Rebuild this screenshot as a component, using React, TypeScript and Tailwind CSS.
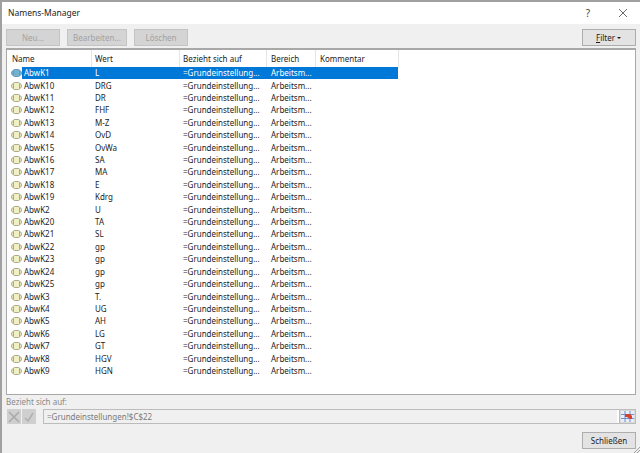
const rows: [string, string][] = [
  ['AbwK1', 'L'],
  ['AbwK10', 'DRG'],
  ['AbwK11', 'DR'],
  ['AbwK12', 'FHF'],
  ['AbwK13', 'M-Z'],
  ['AbwK14', 'OvD'],
  ['AbwK15', 'OvWa'],
  ['AbwK16', 'SA'],
  ['AbwK17', 'MA'],
  ['AbwK18', 'E'],
  ['AbwK19', 'Kdrg'],
  ['AbwK2', 'U'],
  ['AbwK20', 'TA'],
  ['AbwK21', 'SL'],
  ['AbwK22', 'gp'],
  ['AbwK23', 'gp'],
  ['AbwK24', 'gp'],
  ['AbwK25', 'gp'],
  ['AbwK3', 'T.'],
  ['AbwK4', 'UG'],
  ['AbwK5', 'AH'],
  ['AbwK6', 'LG'],
  ['AbwK7', 'GT'],
  ['AbwK8', 'HGV'],
  ['AbwK9', 'HGN'],
];

function NameIcon({ selected }: { selected: boolean }) {
  const fill = selected ? '#74b0d0' : '#f1efc4';
  const stroke = selected ? '#6a9ab5' : '#aaa98a';
  return (
    <svg width="11" height="8" viewBox="0 0 11 8" className="shrink-0">
      <rect x="0.5" y="1.5" width="10" height="5" rx="2.5" fill={fill} stroke={stroke} />
      <rect x="2.5" y="0.5" width="6" height="7" rx="1" fill={fill} stroke={stroke} />
    </svg>
  );
}

function RangeIcon() {
  return (
    <svg width="13" height="11" viewBox="0 0 13 11">
      <rect x="0" y="0" width="13" height="11" fill="#e8eef8" />
      <path d="M0 3.5h13M0 7.5h13M4 0v11M9 0v11" stroke="#6c8fd0" strokeWidth="1" />
      <path d="M4 3h5l2 2v3H9L6 6H4z" fill="#d8402c" />
    </svg>
  );
}

function GreyButton({ label, width }: { label: string; width: string }) {
  return (
    <div className={`flex h-[17px] items-center justify-center border border-[#c4c4c4] bg-[#d4d4d4] text-[#a2a2a2] ${width}`}>
      {label}
    </div>
  );
}

export default function App() {
  return (
    <div className="relative flex h-[453px] w-[640px] flex-col overflow-hidden border-t-2 border-l-2 border-[#a0a0a0] bg-[#f0f0f0] font-['Noto_Sans',sans-serif] text-[8px] leading-none text-[#1c1c1c]">
      <div className="flex h-[22px] shrink-0 items-center bg-white pl-[6px] pr-[12px] text-[8.5px]">
        <span className="flex-1">Namens-Manager</span>
        <span className="mr-[28px] text-[10px] text-[#444]">?</span>
        <svg width="10" height="10" viewBox="0 0 10 10">
          <path d="M1 1l8 8M9 1l-8 8" stroke="#444" strokeWidth="0.8" />
        </svg>
      </div>

      <div className="flex shrink-0 items-center gap-[7px] px-[4px] pt-[5px]">
        <GreyButton label="Neu..." width="w-[54px]" />
        <GreyButton label="Bearbeiten..." width="ml-[0px] w-[60px]" />
        <GreyButton label="Löschen" width="w-[54px]" />
        <div className="ml-auto flex h-[17px] w-[54px] items-center justify-center border border-[#adadad] bg-[#e3e3e3] pr-[1px]">
          <span className="underline">F</span>ilter
          <svg width="4" height="2" viewBox="0 0 4 2" className="ml-[2px]">
            <path d="M0 0h4L2 2z" fill="#1c1c1c" />
          </svg>
        </div>
      </div>

      <div className="mx-[4px] mt-[2px] h-[347px] shrink-0 border border-t-[2px] border-[#a8a8a8] bg-white pl-[1px]">
        <div className="grid h-[17px] w-[391px] grid-cols-[84px_88px_87px_49px_83px] items-center">
          <span className="h-full border-r border-[#e5e5e5] pl-[4px] pt-[5px]">Name</span>
          <span className="h-full border-r border-[#e5e5e5] pl-[3px] pt-[5px]">Wert</span>
          <span className="h-full border-r border-[#e5e5e5] pl-[3px] pt-[5px]">Bezieht sich auf</span>
          <span className="h-full border-r border-[#e5e5e5] pl-[4px] pt-[5px]">Bereich</span>
          <span className="h-full border-r border-[#e5e5e5] pl-[4px] pt-[5px]">Kommentar</span>
        </div>
        {rows.map(([name, value], i) => (
          <div key={name} className="flex h-[12.42px] w-[390px] items-center pl-[3px]">
            <NameIcon selected={i === 0} />
            <div className={`grid h-full flex-1 grid-cols-[70px_88px_87px_131px] items-center ${i === 0 ? 'bg-[#0078d7] text-white' : ''}`}>
              <span className="pl-[2px]">{name}</span>
              <span className="pl-[3px]">{value}</span>
              <span className="pl-[3px]">=Grundeinstellung...</span>
              <span className="pl-[4px]">Arbeitsm...</span>
            </div>
          </div>
        ))}
      </div>

      <div className="mt-[3px] shrink-0 pl-[4px] text-[#8a8a8a]">Bezieht sich auf:</div>
      <div className="mt-[3px] flex h-[15px] shrink-0 items-stretch pl-[5px] pr-[4px]">
        <div className="flex w-[14px] items-center justify-center bg-[#cfcfcf]">
          <svg width="12" height="12" viewBox="0 0 12 12">
            <path d="M1 1l10 10M11 1L1 11" stroke="#a8a8a8" strokeWidth="1.5" />
          </svg>
        </div>
        <div className="ml-[1px] flex w-[14px] items-center justify-center bg-[#cfcfcf]">
          <svg width="12" height="12" viewBox="0 0 12 12">
            <path d="M2 7l3 3 5-8" fill="none" stroke="#b0b0b0" strokeWidth="1.5" />
          </svg>
        </div>
        <div className="ml-[7px] flex flex-1 items-center border border-[#bcbcbc] pl-[3px] text-[#7a7a7a]">
          =Grundeinstellungen!$C$22
          <div className="ml-auto h-full w-[2px] bg-white" />
        </div>
        <div className="flex w-[16px] items-center justify-center border-y border-r border-[#bcbcbc] bg-[#d8d8d8]">
          <RangeIcon />
        </div>
      </div>

      <div className="mt-[8px] flex shrink-0 justify-end pr-[4px]">
        <div className="flex h-[17px] w-[54px] items-center justify-center border border-[#adadad] bg-[#e3e3e3]">
          Schließen
        </div>
      </div>

      <svg width="7" height="7" viewBox="0 0 7 7" className="absolute right-0 bottom-0">
        <path d="M7 1L1 7M7 4L4 7" stroke="#a0a0a0" strokeWidth="1" />
      </svg>
    </div>
  );
}
